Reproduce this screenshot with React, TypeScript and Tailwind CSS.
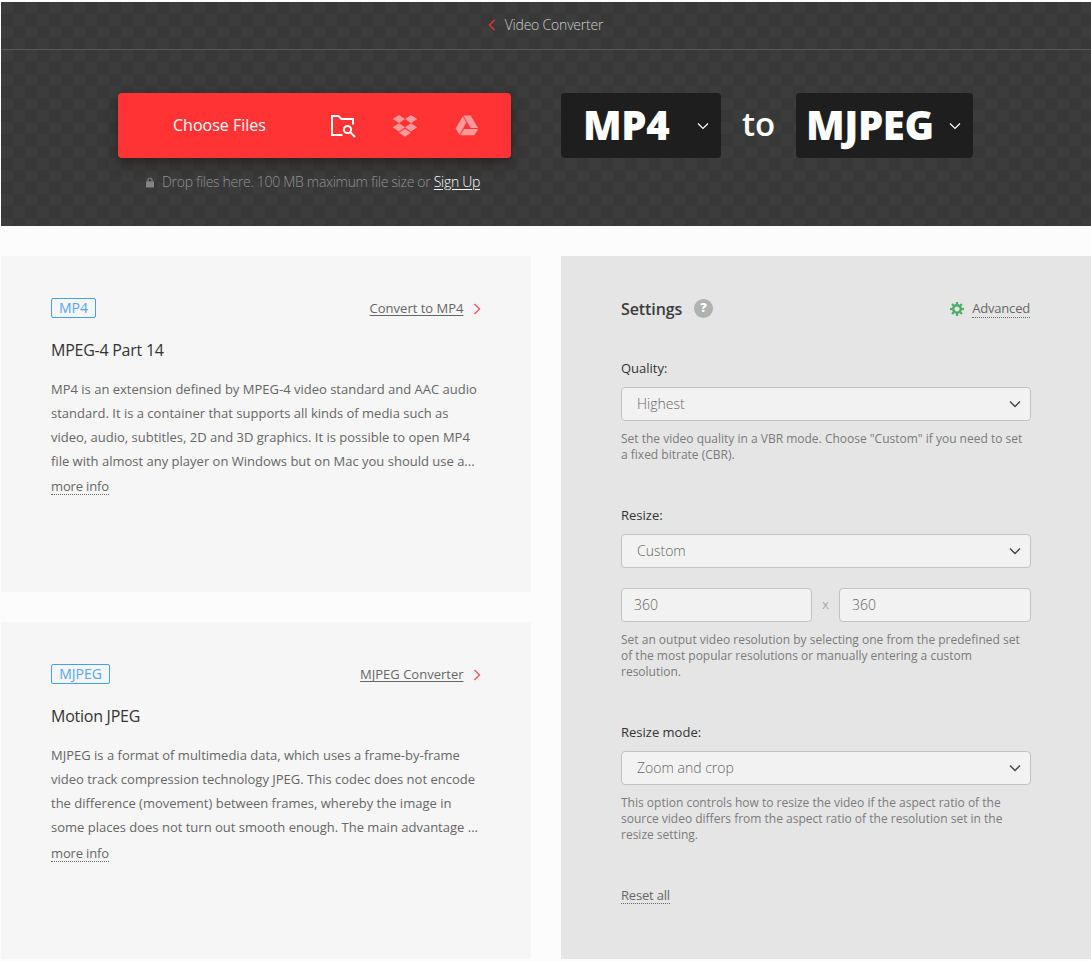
import React from "react";

function Chevron({ className, width = 1.2 }: { className: string; width?: number }) {
  return (
    <svg viewBox="0 0 12 12" className={className} fill="none" stroke="currentColor" strokeWidth={width}>
      <path d="M1 3.5 6 8.5 11 3.5" />
    </svg>
  );
}

function FolderSearchIcon() {
  return (
    <svg viewBox="0 0 26 24" className="h-6 w-[26px] text-white" fill="none" stroke="currentColor" strokeWidth="2">
      <path d="M12.5 21H2V2H8.5L11.5 5H23V10.5" />
      <circle cx="17.5" cy="15.5" r="3.6" />
      <path d="M20.3 18.3 25 23" />
    </svg>
  );
}

function DropboxIcon() {
  return (
    <svg viewBox="0 0 26 22" className="h-[22px] w-[26px]" fill="#ff9898">
      <path d="M7 0 13 4 7 8 0.7 4zM19 0 25.3 4 19 8 13 4zM7 8.3 13 12.3 7 16.4 0.7 12.3zM19 8.3 25.3 12.3 19 16.4 13 12.3zM7 17.7 13 13.8 19 17.7 13 21.8z" />
    </svg>
  );
}

function DriveIcon() {
  return (
    <svg viewBox="0 0 24 21" className="h-[21px] w-6" fill="#ff9898">
      <path d="M8.3 0.5H15.7L23 13H15.7z" />
      <path d="M7.7 1.3 11.4 7.6 4.4 19.8 0.6 13.4z" />
      <path d="M9 13.9H23.2L19.4 20.3H5.3z" />
    </svg>
  );
}

function LockIcon() {
  return (
    <svg viewBox="0 0 8 11" className="h-[11px] w-2" fill="none">
      <path d="M2 5V3a2 2 0 0 1 4 0v2" stroke="#858585" strokeWidth="1.2" />
      <path d="M0 4.5H8V10.5H0z" fill="#858585" />
    </svg>
  );
}

function GearIcon() {
  return (
    <svg viewBox="-7 -7 14 14" className="size-3.5" fill="none" stroke="#4bae68">
      <circle r="3.8" strokeWidth="2.4" />
      {[0, 45, 90, 135, 180, 225, 270, 315].map((a) => (
        <path key={a} d="M0-4.5V-7" strokeWidth="2.2" transform={`rotate(${a})`} />
      ))}
    </svg>
  );
}

function FormatCard(props: { tag: string; tagClass: string; link: string; title: string; lines: string[]; className: string; moreClass: string }) {
  return (
    <section className={`w-[530px] bg-[#f6f6f6] pr-[48.5px] pl-[50px] pt-[41px] ${props.className}`}>
      <div className="flex h-[22px] items-center justify-between">
        <span className={`flex h-5 items-center justify-center rounded-[2px] border border-[#3fa2f7] text-sm leading-none text-[#55a6f8] ${props.tagClass}`}>
          {props.tag}
        </span>
        <a className="flex items-center gap-[7px] text-[13px] leading-5 text-[#666]">
          <span className="underline underline-offset-2">{props.link}</span>
          <Chevron className="mt-px size-3 -rotate-90 text-[#f55]" width={1.4} />
        </a>
      </div>
      <h2 className="mt-[19px] text-base leading-[24px] tracking-[-0.25px] text-[#333]">{props.title}</h2>
      <p className="mt-[15px] text-[13px] leading-[24px] whitespace-nowrap text-[#666]">
        {props.lines.map((line) => (
          <span key={line} className="block">{line}</span>
        ))}
      </p>
      <a className={`inline-block border-b border-dotted border-[#666] text-[13px] leading-[16px] tracking-[-0.15px] text-[#666] ${props.moreClass}`}>more info</a>
    </section>
  );
}

function SelectBox({ value }: { value: string }) {
  return (
    <div className="mt-[10px] flex h-[34px] items-center justify-between rounded-[4px] border border-[#c2c2c2] bg-[#f2f2f2] pr-[9.5px] pl-[15px] text-sm font-light text-[#666]">
      {value}
      <Chevron className="size-3 text-[#444]" width={1.4} />
    </div>
  );
}

function NumberBox({ className }: { className: string }) {
  return (
    <div className={`flex h-[34px] items-center rounded-[4px] border border-[#c2c2c2] bg-[#f2f2f2] pl-3 text-sm font-light text-[#666] ${className}`}>360</div>
  );
}

function Label({ children, className }: { children: React.ReactNode; className: string }) {
  return <div className={`text-[13px] leading-[18px] text-[#333] ${className}`}>{children}</div>;
}

function Hint({ lines }: { lines: string[] }) {
  return (
    <p className="mt-[10px] text-xs leading-[16px] whitespace-nowrap text-[#7b7b7b]">
      {lines.map((line) => (
        <span key={line} className="block">{line}</span>
      ))}
    </p>
  );
}

export default function App() {
  return (
    <div className="h-[961px] w-[1091px] overflow-hidden bg-[#fcfcfc] pt-[2px] pl-px font-['Open_Sans',sans-serif]">
      <header className="h-[224px] bg-[#383838] bg-[conic-gradient(#383838_25%,#3c3c3c_0_50%,#383838_0_75%,#3c3c3c_0)] bg-[length:24px_24px]">
        <div className="flex h-12 items-center justify-center gap-[7px] border-b border-[#575757] pr-[3px] pb-[2px] text-sm font-light tracking-[-0.2px] text-[#ccc]">
          <Chevron className="size-3 rotate-90 text-[#e33]" width={1.4} />
          Video Converter
        </div>
        <div className="flex pt-[43px] pl-[117px]">
          <div className="w-[393px]">
            <div className="flex h-[65px] items-center rounded-[4px] bg-[#f33] shadow-[0_5px_12px_rgba(30,15,15,0.55)]">
              <span className="ml-[55px] w-[157px] pb-[2px] text-base text-white">Choose Files</span>
              <FolderSearchIcon />
              <span className="ml-[36px]"><DropboxIcon /></span>
              <span className="ml-[37px]"><DriveIcon /></span>
            </div>
            <div className="mt-[14px] flex items-center pl-7 text-sm leading-5 font-light tracking-[-0.3px] whitespace-nowrap text-[#929292]">
              <LockIcon />
              <span className="ml-2">Drop files here. 100 MB maximum file size or <a className="text-white underline underline-offset-2">Sign Up</a></span>
            </div>
          </div>
          <div className="ml-[50px] flex h-[65px] w-[160px] items-center justify-between rounded-[4px] bg-[#1e1e1e] pr-3 pl-[22px] text-[40px] font-extrabold tracking-[-0.4px] text-white">
            <span className="pb-[2px]">MP4</span>
            <Chevron className="size-3" />
          </div>
          <div className="flex h-[62px] w-[75px] items-center justify-center text-[33px] font-semibold text-white">to</div>
          <div className="flex h-[65px] w-[177px] items-center justify-between rounded-[4px] bg-[#1e1e1e] pr-3 pl-[10px] text-[40px] font-extrabold tracking-[-0.4px] text-white">
            <span className="pb-[2px]">MJPEG</span>
            <Chevron className="size-3" />
          </div>
        </div>
      </header>
      <main className="flex gap-[30px] pt-[30px]">
        <div className="flex flex-col gap-[30px]">
          <FormatCard
            className="h-[336px]"
            tagClass="w-[45px]"
            moreClass="mt-[5px]"
            tag="MP4"
            link="Convert to MP4"
            title="MPEG-4 Part 14"
            lines={[
              "MP4 is an extension defined by MPEG-4 video standard and AAC audio",
              "standard. It is a container that supports all kinds of media such as",
              "video, audio, subtitles, 2D and 3D graphics. It is possible to open MP4",
              "file with almost any player on Windows but on Mac you should use a...",
            ]}
          />
          <FormatCard
            className="h-[337px]"
            tagClass="w-[59px]"
            moreClass="mt-[6px]"
            tag="MJPEG"
            link="MJPEG Converter"
            title="Motion JPEG"
            lines={[
              "MJPEG is a format of multimedia data, which uses a frame-by-frame",
              "video track compression technology JPEG. This codec does not encode",
              "the difference (movement) between frames, whereby the image in",
              "some places does not turn out smooth enough. The main advantage ...",
            ]}
          />
        </div>
        <section className="h-[703px] w-[530px] bg-[#e5e5e5] pt-[41px] pr-[60px] pl-[60px]">
          <div className="flex h-6 items-center">
            <h2 className="w-[62px] text-base font-semibold tracking-[-0.1px] text-[#3c3c3c]">Settings</h2>
            <span className="ml-[11px] flex size-[19px] -translate-y-px items-center justify-center rounded-full bg-[#b1b1b1] text-[13px] font-extrabold text-white">?</span>
            <span className="ml-auto"><GearIcon /></span>
            <a className="mr-px ml-2 border-b border-dotted border-[#666] text-[13px] leading-[17px] tracking-[-0.2px] text-[#666]">Advanced</a>
          </div>
          <Label className="mt-[38px]">Quality:</Label>
          <SelectBox value="Highest" />
          <Hint lines={['Set the video quality in a VBR mode. Choose "Custom" if you need to set', "a fixed bitrate (CBR)."]} />
          <Label className="mt-[43px]">Resize:</Label>
          <SelectBox value="Custom" />
          <div className="mt-5 flex items-center justify-between">
            <NumberBox className="w-[191px]" />
            <span className="text-[13px] font-light text-[#888]">x</span>
            <NumberBox className="w-[192px]" />
          </div>
          <Hint
            lines={[
              "Set an output video resolution by selecting one from the predefined set",
              "of the most popular resolutions or manually entering a custom",
              "resolution.",
            ]}
          />
          <Label className="mt-[43px]">Resize mode:</Label>
          <SelectBox value="Zoom and crop" />
          <Hint
            lines={[
              "This option controls how to resize the video if the aspect ratio of the",
              "source video differs from the aspect ratio of the resolution set in the",
              "resize setting.",
            ]}
          />
          <a className="mt-[44px] inline-block border-b border-dotted border-[#666] text-[13px] leading-[16px] tracking-[-0.2px] text-[#666]">Reset all</a>
        </section>
      </main>
    </div>
  );
}
